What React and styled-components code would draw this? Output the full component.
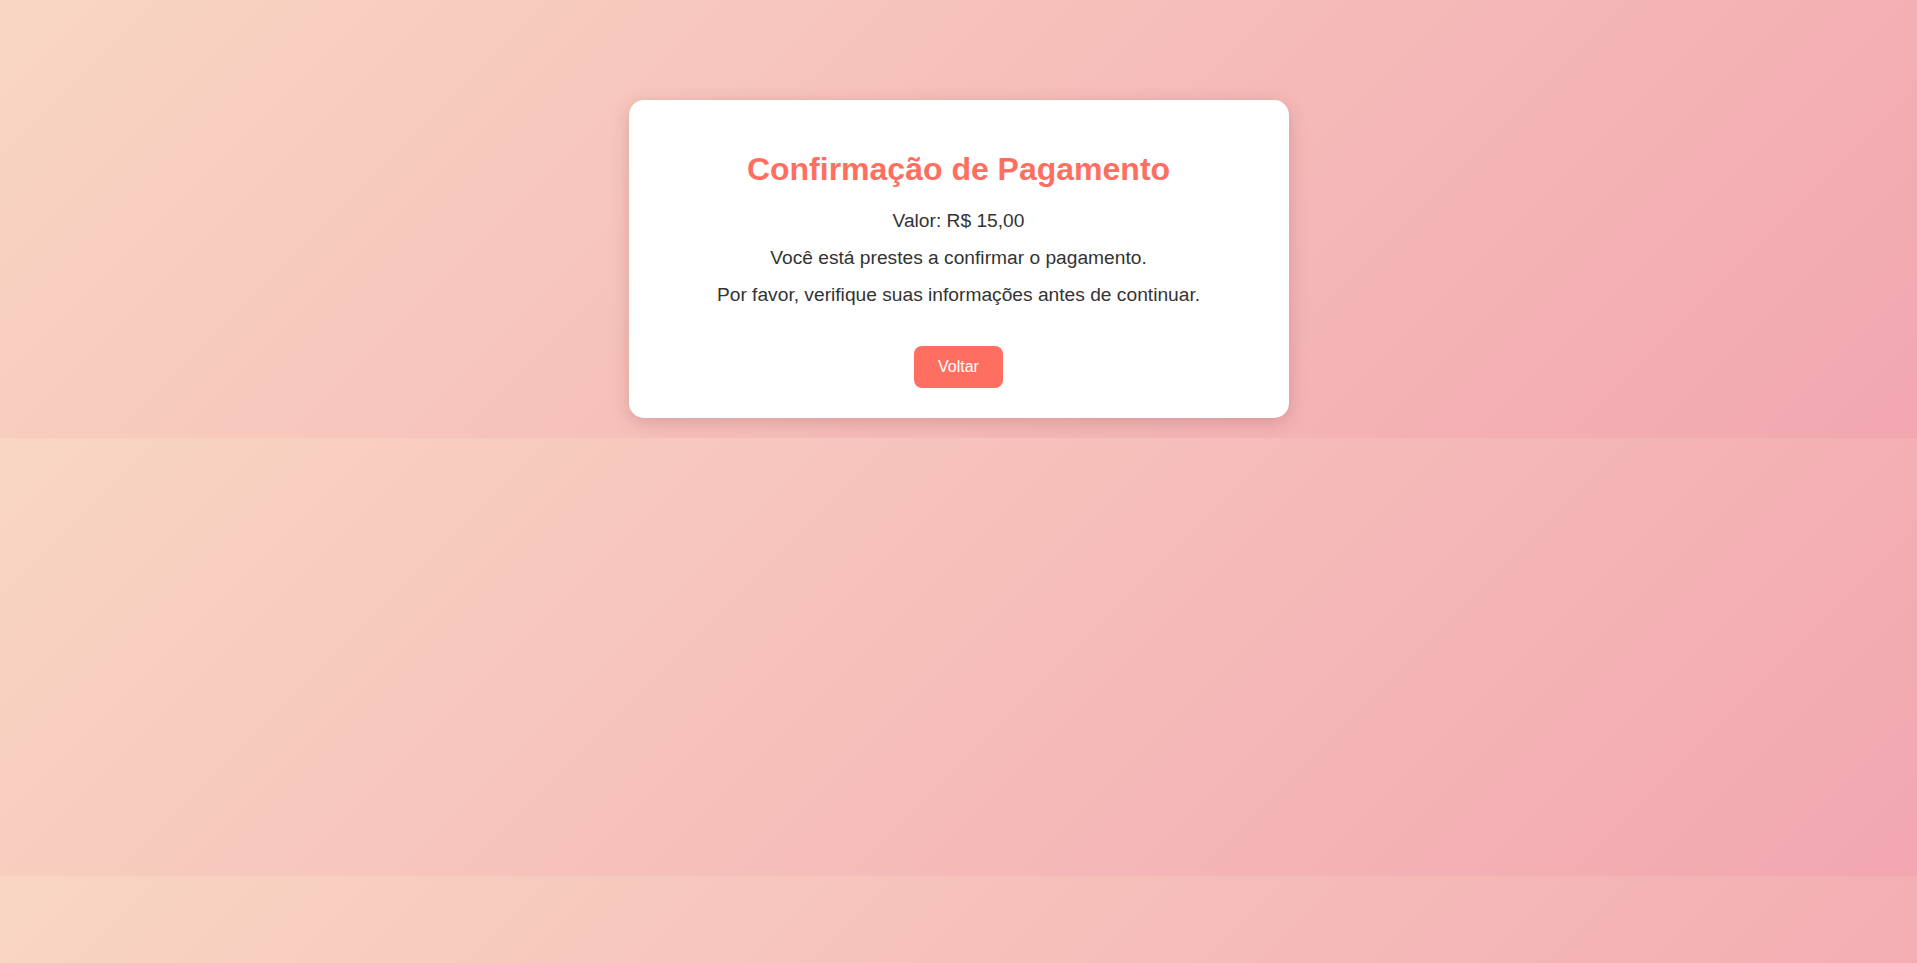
import React from "react";
import styled, { createGlobalStyle } from "styled-components";

const GlobalStyle = createGlobalStyle`
  html, body {
    margin: 0;
  }
  body {
    padding: 20px;
    font-family: "Liberation Sans", Arial, sans-serif;
    background: linear-gradient(135deg, #f9d6c3 0%, #f2a6b0 100%);
  }
`;

const Card = styled.div`
  width: 600px;
  margin: 80px auto 0;
  padding: 30px;
  background: #ffffff;
  border-radius: 15px;
  box-shadow: 0 4px 18px rgba(120, 40, 40, 0.22);
  text-align: center;
`;

const Title = styled.h1`
  margin: 0.67em 0;
  font-size: 32px;
  font-weight: bold;
  color: #ff6f61;
`;

const Text = styled.p`
  margin: 15px 0;
  font-size: 1.2em;
  color: #333333;
`;

const Actions = styled.div`
  margin-top: 40px;
  line-height: 0;
`;

const Button = styled.button`
  font-family: "Liberation Sans", Arial, sans-serif;
  font-size: 16px;
  line-height: 18px;
  padding: 12px 24px;
  border: none;
  border-radius: 8px;
  background: #ff6f61;
  color: #ffffff;
  cursor: pointer;
`;

export default function App() {
  return (
    <>
      <GlobalStyle />
      <Card>
        <Title>Confirmação de Pagamento</Title>
        <Text>Valor: R$ 15,00</Text>
        <Text>Você está prestes a confirmar o pagamento.</Text>
        <Text>Por favor, verifique suas informações antes de continuar.</Text>
        <Actions>
          <Button>Voltar</Button>
        </Actions>
      </Card>
    </>
  );
}
